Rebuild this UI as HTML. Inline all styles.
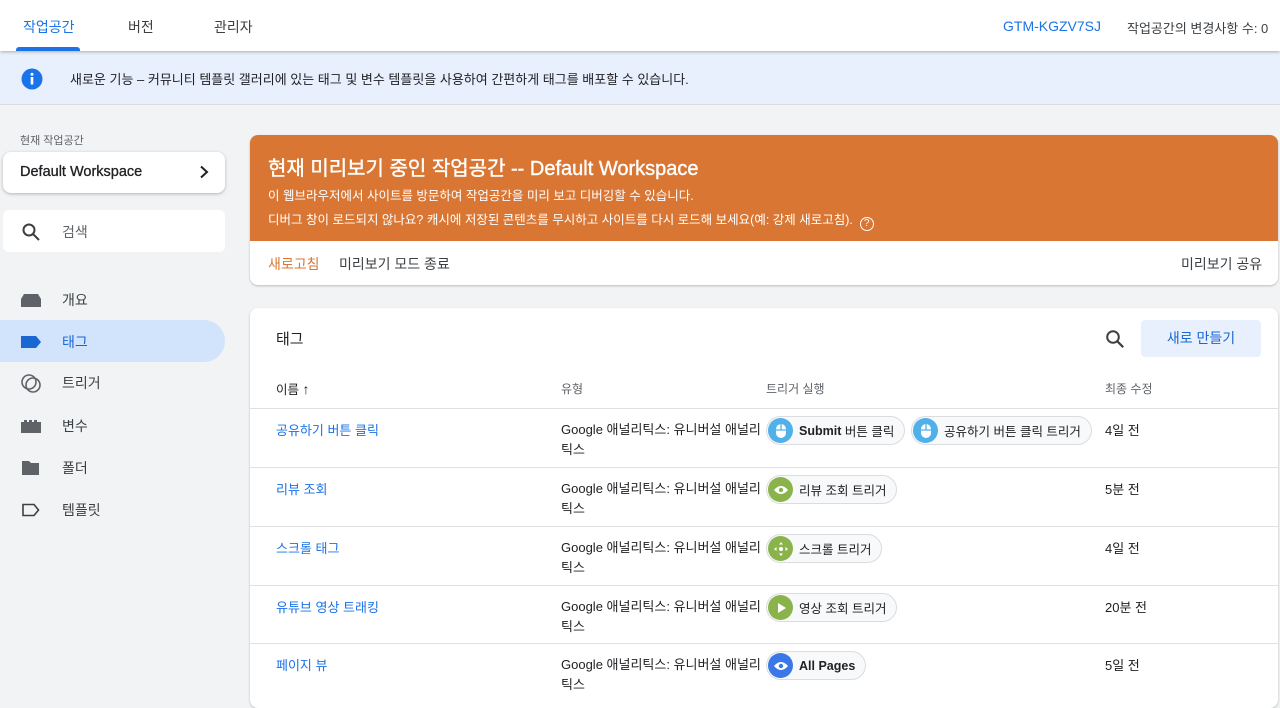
<!DOCTYPE html>
<html><head><meta charset="utf-8"><style>
*{box-sizing:border-box;margin:0;padding:0}
body{width:1280px;height:702px;overflow:hidden;background:#f1f3f4;font-family:"Liberation Sans","Noto Sans CJK KR",sans-serif;color:#202124;position:relative}
.abs{position:absolute}
.hdr{left:0;top:0;width:1280px;height:51px;background:#fff;box-shadow:0 1px 3px rgba(0,0,0,.3);z-index:2}
.tab{top:17px;font-size:14px;color:#3c4043}
.banner{left:0;top:53px;width:1280px;height:52px;background:#e8f0fe;border-bottom:1px solid #dadce0}
.nav{left:20px;font-size:14px;color:#3c4043;display:flex;align-items:center}
.nav svg{margin-right:20px}
.card{background:#fff;border-radius:8px;box-shadow:0 1px 2px rgba(60,64,67,.3)}
.row{left:0;width:1028px;height:59px;border-top:1px solid #e0e0e0;font-size:13px}
.row .n{position:absolute;left:26px;top:11px;color:#1a73e8}
.row .t{position:absolute;left:311px;top:11px;line-height:20px;color:#202124;width:210px}
.row .d{position:absolute;left:855px;top:11px}
.chip{position:absolute;top:7px;height:29px;border:1px solid #dadce0;border-radius:15px;background:#f8f9fa;display:flex;align-items:center;padding-right:10px;font-size:12.5px;font-weight:bold;color:#202124}
.chip .ic{width:25px;height:25px;border-radius:50%;margin:0 6px 0 1px;display:flex;align-items:center;justify-content:center}
.chip span{font-weight:normal}
</style></head><body>
<div class="abs hdr">
 <div class="abs tab" style="left:23px;color:#1a73e8">작업공간</div>
 <div class="abs" style="left:16px;top:47px;width:64px;height:4px;background:#1a73e8;border-radius:3px 3px 0 0"></div>
 <div class="abs tab" style="left:128px">버전</div>
 <div class="abs tab" style="left:214px">관리자</div>
 <div class="abs tab" style="left:1003px;color:#1a73e8;top:18px">GTM-KGZV7SJ</div>
 <div class="abs tab" style="left:1127px;font-size:13px;top:18px">작업공간의 변경사항 수: 0</div>
</div>
<div class="abs banner">
 <svg class="abs" style="left:21px;top:15px" width="22" height="22" viewBox="0 0 22 22"><circle cx="11" cy="11" r="10.5" fill="#1a73e8"/><rect x="9.7" y="9" width="2.6" height="7.5" fill="#fff"/><circle cx="11" cy="6.2" r="1.5" fill="#fff"/></svg>
 <div class="abs" style="left:70px;top:16px;font-size:13px;color:#202124">새로운 기능 – 커뮤니티 템플릿 갤러리에 있는 태그 및 변수 템플릿을 사용하여 간편하게 태그를 배포할 수 있습니다.</div>
</div>
<div class="abs" style="left:20px;top:132px;font-size:11px;color:#5f6368">현재 작업공간</div>
<div class="abs card" style="left:3px;top:152px;width:222px;height:41px;box-shadow:0 1px 3px rgba(60,64,67,.35)">
 <div class="abs" style="left:17px;top:12px;font-size:14.5px;color:#202124;-webkit-text-stroke:0.3px #202124">Default Workspace</div>
 <svg class="abs" style="left:195px;top:13px" width="12" height="14" viewBox="0 0 12 14"><path d="M3 1.5l6 5.5-6 5.5" stroke="#202124" stroke-width="2" fill="none"/></svg>
</div>
<div class="abs" style="left:3px;top:210px;width:222px;height:42px;background:#fff;border-radius:6px">
 <svg class="abs" style="left:18px;top:12px" width="20" height="20" viewBox="0 0 20 20"><circle cx="8" cy="8" r="5.5" stroke="#3c4043" stroke-width="2" fill="none"/><path d="M12 12l6 6" stroke="#3c4043" stroke-width="2"/></svg>
 <div class="abs" style="left:59px;top:12px;font-size:14px;color:#5f6368">검색</div>
</div>
<div class="abs" style="left:0;top:320px;width:225px;height:42px;background:#d2e3fc;border-radius:0 21px 21px 0"></div>
<div class="abs nav" style="top:290px"><svg width="22" height="16" viewBox="0 0 22 16"><path d="M4 2h14l3 5v8H1V7z" fill="#5f6368"/></svg>개요</div>
<div class="abs nav" style="top:332px;color:#1967d2"><svg width="22" height="16" viewBox="0 0 22 16"><path d="M1 2h15l5 6-5 6H1z" fill="#1967d2"/></svg>태그</div>
<div class="abs nav" style="top:373px"><svg width="22" height="20" viewBox="0 0 22 20"><circle cx="9" cy="9" r="7" stroke="#5f6368" stroke-width="1.6" fill="none"/><circle cx="13" cy="12" r="7" stroke="#5f6368" stroke-width="1.6" fill="none"/></svg>트리거</div>
<div class="abs nav" style="top:416px"><svg width="22" height="16" viewBox="0 0 22 16"><path d="M1 4h3V2h3v2h2V2h3v2h2V2h3v2h4v11H1z" fill="#5f6368"/></svg>변수</div>
<div class="abs nav" style="top:458px"><svg width="22" height="16" viewBox="0 0 22 16"><path d="M2 1h7l2 2h8v12H2z" fill="#5f6368"/></svg>폴더</div>
<div class="abs nav" style="top:500px"><svg width="22" height="16" viewBox="0 0 22 16"><path d="M3 2.5h11l4.5 5.5-4.5 5.5H3z" stroke="#3c4043" stroke-width="1.6" fill="none"/></svg>템플릿</div>

<div class="abs card" style="left:250px;top:135px;width:1028px;height:150px;overflow:hidden">
 <div class="abs" style="left:0;top:0;width:1028px;height:106px;background:#d97633"></div>
 <div class="abs" style="left:18px;top:17px;font-size:20px;color:#fff;-webkit-text-stroke:0.4px #fff">현재 미리보기 중인 작업공간 -- Default Workspace</div>
 <div class="abs" style="left:18px;top:50px;font-size:12.5px;color:#fff">이 웹브라우저에서 사이트를 방문하여 작업공간을 미리 보고 디버깅할 수 있습니다.</div>
 <div class="abs" style="left:18px;top:74px;font-size:12.5px;color:#fff">디버그 창이 로드되지 않나요? 캐시에 저장된 콘텐츠를 무시하고 사이트를 다시 로드해 보세요(예: 강제 새로고침). &nbsp;<span style="display:inline-block;width:14px;height:14px;border:1.5px solid #fff;border-radius:50%;font-size:10px;text-align:center;line-height:11px;vertical-align:-2px">?</span></div>
 <div class="abs" style="left:18px;top:119px;font-size:14px;color:#d97633">새로고침</div>
 <div class="abs" style="left:89px;top:119px;font-size:14px;color:#3c4043">미리보기 모드 종료</div>
 <div class="abs" style="left:931px;top:119px;font-size:14px;color:#3c4043">미리보기 공유</div>
</div>

<div class="abs card" style="left:250px;top:308px;width:1028px;height:400px">
 <div class="abs" style="left:26px;top:20px;font-size:15px">태그</div>
 <svg class="abs" style="left:855px;top:21px" width="20" height="20" viewBox="0 0 20 20"><circle cx="8" cy="8" r="5.8" stroke="#3c4043" stroke-width="2" fill="none"/><path d="M12.2 12.2l6 6" stroke="#3c4043" stroke-width="2.2"/></svg>
 <div class="abs" style="left:891px;top:12px;width:120px;height:37px;background:#e8f0fe;border-radius:4px;color:#1967d2;font-size:14px;text-align:center;line-height:37px">새로 만들기</div>
 <div class="abs" style="left:26px;top:71px;font-size:12.5px">이름 <b style="font-size:14px">↑</b></div>
 <div class="abs" style="left:311px;top:72px;font-size:12px;color:#5f6368">유형</div>
 <div class="abs" style="left:516px;top:72px;font-size:12px;color:#5f6368">트리거 실행</div>
 <div class="abs" style="left:855px;top:72px;font-size:12px;color:#5f6368">최종 수정</div>

 <div class="abs row" style="top:100px"><div class="n">공유하기 버튼 클릭</div><div class="t">Google 애널리틱스: 유니버설 애널리틱스</div>
  <div class="chip" style="left:516px"><div class="ic" style="background:#4fb0ea"><svg width="12" height="16" viewBox="0 0 12 16"><rect x="1" y="1" width="10" height="14" rx="5" fill="#fff"/><path d="M1 7h10M6 1v6" stroke="#4fb0ea" stroke-width="1.3"/></svg></div>Submit&nbsp;<span>버튼 클릭</span></div>
  <div class="chip" style="left:661px"><div class="ic" style="background:#4fb0ea"><svg width="12" height="16" viewBox="0 0 12 16"><rect x="1" y="1" width="10" height="14" rx="5" fill="#fff"/><path d="M1 7h10M6 1v6" stroke="#4fb0ea" stroke-width="1.3"/></svg></div><span>공유하기 버튼 클릭 트리거</span></div>
  <div class="d">4일 전</div></div>
 <div class="abs row" style="top:159px"><div class="n">리뷰 조회</div><div class="t">Google 애널리틱스: 유니버설 애널리틱스</div>
  <div class="chip" style="left:516px"><div class="ic" style="background:#8ab44b"><svg width="16" height="12" viewBox="0 0 16 12"><path d="M1 6q7-8 14 0-7 8-14 0z" fill="#fff"/><circle cx="8" cy="6" r="2.2" fill="#8ab44b"/></svg></div><span>리뷰 조회 트리거</span></div>
  <div class="d">5분 전</div></div>
 <div class="abs row" style="top:218px"><div class="n">스크롤 태그</div><div class="t">Google 애널리틱스: 유니버설 애널리틱스</div>
  <div class="chip" style="left:516px"><div class="ic" style="background:#8ab44b"><svg width="16" height="16" viewBox="0 0 16 16"><path d="M8 1l2 2.5H6zM8 15l2-2.5H6zM1 8l2.5-2v4zM15 8l-2.5-2v4z" fill="#fff"/><circle cx="8" cy="8" r="2" fill="#fff"/></svg></div><span>스크롤 트리거</span></div>
  <div class="d">4일 전</div></div>
 <div class="abs row" style="top:277px"><div class="n">유튜브 영상 트래킹</div><div class="t">Google 애널리틱스: 유니버설 애널리틱스</div>
  <div class="chip" style="left:516px"><div class="ic" style="background:#8ab44b"><svg width="12" height="12" viewBox="0 0 12 12"><path d="M3 1l8 5-8 5z" fill="#fff"/></svg></div><span>영상 조회 트리거</span></div>
  <div class="d">20분 전</div></div>
 <div class="abs row" style="top:335px"><div class="n">페이지 뷰</div><div class="t">Google 애널리틱스: 유니버설 애널리틱스</div>
  <div class="chip" style="left:516px"><div class="ic" style="background:#3b78e7"><svg width="16" height="12" viewBox="0 0 16 12"><path d="M1 6q7-8 14 0-7 8-14 0z" fill="#fff"/><circle cx="8" cy="6" r="2.2" fill="#3b78e7"/></svg></div>All Pages</div>
  <div class="d">5일 전</div></div>
</div>
</body></html>
